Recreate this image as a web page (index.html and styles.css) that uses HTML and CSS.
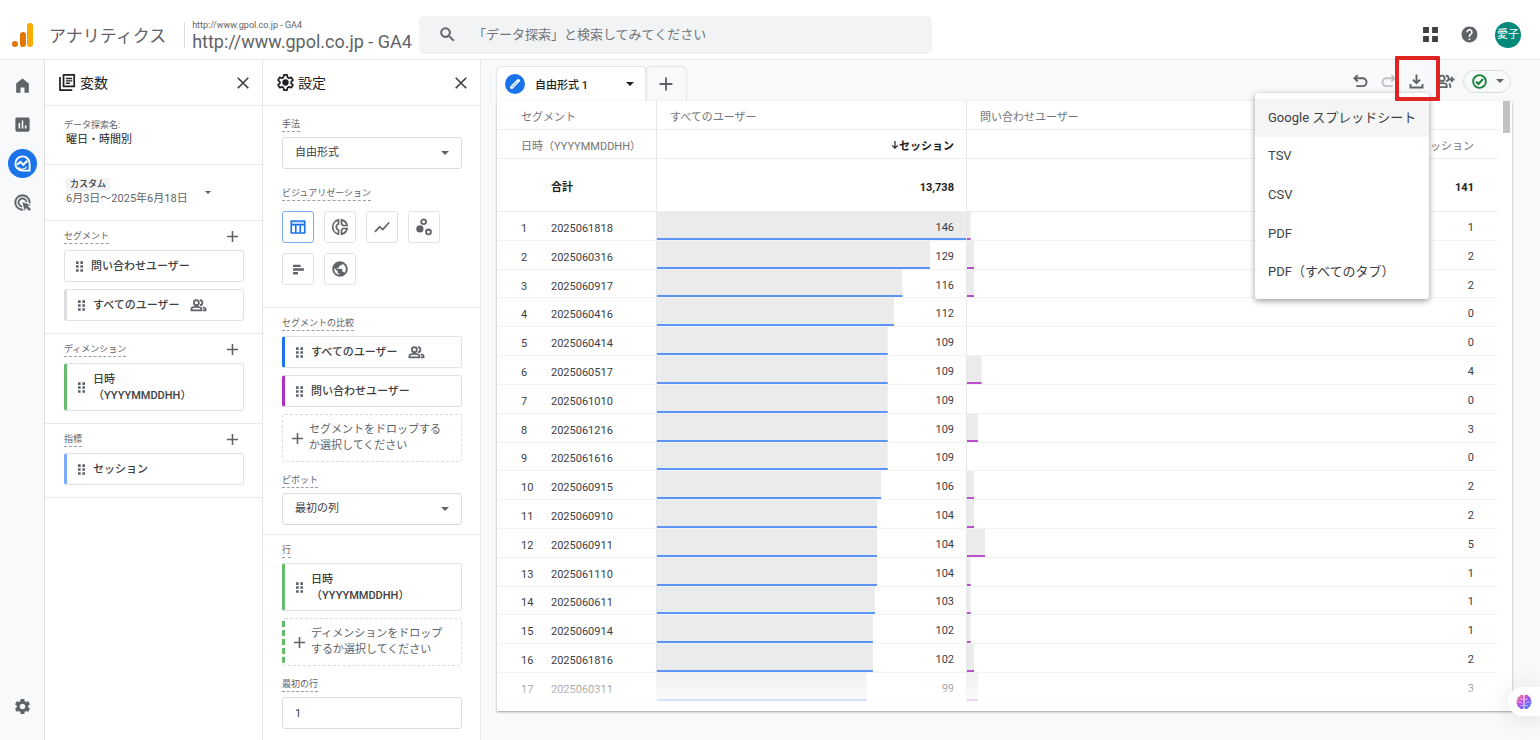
FILE: index.html
```
<!DOCTYPE html>
<html lang="ja">
<head>
    <meta charset="UTF-8">
    <meta name="viewport" content="width=device-width, initial-scale=1.0">
    <title>アナリティクス</title>
    <link rel="stylesheet" href="styles.css">
</head>
<body>
    <svg class="sprite" aria-hidden="true">
        <symbol id="i-home" viewBox="0 0 24 24"><path d="M4 21V9.500L12 3l8 6.500V21h-5.500v-6.500h-5V21z"/></symbol>
        <symbol id="i-report" viewBox="0 0 24 24"><path d="M19 3H5c-1.100 0-2 .9-2 2v14c0 1.100.9 2 2 2h14c1.100 0 2-.9 2-2V5c0-1.100-.9-2-2-2zM9 17H7v-7h2v7zm4 0h-2V7h2v10zm4 0h-2v-4h2v4z"/></symbol>
        <symbol id="i-explore" viewBox="0 0 24 24"><path d="M21 21V12a9 9 0 1 0-9 9z" fill="none" stroke="currentColor" stroke-width="2.400"/><path d="M5 13.500l4.500-3.500 3.500 3.500 5-5" fill="none" stroke="currentColor" stroke-width="2.600"/><path d="M7 17a6 6 0 0 0 10-1" fill="none" stroke="currentColor" stroke-width="1.500"/></symbol>
        <symbol id="i-click" viewBox="0 0 24 24"><path d="M11.710 17.990C8.530 17.840 6 15.220 6 12c0-3.310 2.690-6 6-6 3.220 0 5.840 2.530 5.990 5.710l-2.100-.63C15.480 9.310 13.890 8 12 8c-2.210 0-4 1.790-4 4 0 1.890 1.310 3.480 3.080 3.890l.63 2.100zM22 12c0 .3-.01.6-.04.9l-1.970-.59c.01-.1.01-.21.01-.31 0-4.420-3.580-8-8-8s-8 3.580-8 8 3.580 8 8 8c.1 0 .21 0 .31-.01l.59 1.970c-.3.030-.6.040-.9.040-5.520 0-10-4.480-10-10S6.480 2 12 2s10 4.480 10 10zm-3.770 4.260L22 15l-10-3 3 10 1.260-3.770 4.270 4.270 1.980-1.980-4.280-4.260z" stroke="currentColor" stroke-width=".4"/></symbol>
        <symbol id="i-gear" viewBox="0 0 24 24"><path d="M19.140 12.940c.04-.3.06-.61.06-.94 0-.32-.02-.64-.07-.94l2.030-1.580c.18-.14.23-.41.12-.61l-1.920-3.320c-.12-.22-.37-.29-.59-.22l-2.390.96c-.5-.38-1.030-.7-1.620-.94l-.36-2.540c-.04-.24-.24-.41-.48-.41h-3.840c-.24 0-.43.17-.47.41l-.36 2.540c-.59.24-1.130.57-1.620.94l-2.390-.96c-.22-.08-.47 0-.59.22L2.740 8.870c-.12.21-.08.47.12.61l2.030 1.580c-.05.3-.09.63-.09.94s.02.64.07.94l-2.030 1.580c-.18.14-.23.41-.12.61l1.920 3.320c.12.22.37.29.59.22l2.390-.96c.5.38 1.030.7 1.620.94l.36 2.540c.05.24.24.41.48.41h3.840c.24 0 .44-.17.47-.41l.36-2.540c.59-.24 1.130-.56 1.620-.94l2.390.96c.22.08.47 0 .59-.22l1.920-3.320c.12-.22.07-.47-.12-.61l-2.010-1.580zM12 15.600c-1.980 0-3.600-1.620-3.600-3.600s1.620-3.600 3.600-3.600 3.600 1.620 3.600 3.600-1.620 3.600-3.600 3.600z"/></symbol>
        <symbol id="i-gear-line" viewBox="0 0 24 24"><path d="M10 2.500h4l.6 3 1.900 1.100 2.900-1 2 3.500-2.300 2v1.900l2.300 2-2 3.500-2.900-1-1.900 1.100-.6 2.900h-4l-.6-2.900-1.900-1.100-2.900 1-2-3.500 2.300-2v-1.900l-2.300-2 2-3.500 2.900 1 1.900-1.100z" fill="none" stroke="currentColor" stroke-width="2.200" stroke-linejoin="round"/><circle cx="12" cy="12" r="4"/></symbol>
        <symbol id="i-library" viewBox="0 0 24 24"><path d="M7 2.500h13.500V17H7zM2.500 5v16.500H18" fill="none" stroke="currentColor" stroke-width="2.200" stroke-linejoin="round"/><path d="M10 6h8v1.800h-8zM10 9h8v1.800h-8zM10 12h5v1.800h-5z"/></symbol>
        <symbol id="i-close" viewBox="0 0 24 24"><path d="M5 5l14 14M19 5L5 19" stroke="currentColor" stroke-width="2.200"/></symbol>
        <symbol id="i-plus" viewBox="0 0 24 24"><path d="M12 5v14M5 12h14" stroke="currentColor" stroke-width="2"/></symbol>
        <symbol id="i-drag" viewBox="0 0 8 12"><path d="M0 0h3v3H0zM5 0h3v3H5zM0 4.500h3v3H0zM5 4.500h3v3H5zM0 9h3v3H0zM5 9h3v3H5z"/></symbol>
        <symbol id="i-people" viewBox="0 0 24 24"><g fill="none" stroke="currentColor" stroke-width="2.500"><circle cx="9" cy="8" r="3.500"/><path d="M2 19v-2c0-2 4-3 7-3s7 1 7 3v2z"/><path d="M14 4.500a3.500 3.500 0 0 1 0 7M18 14.500c2 .5 4 1.300 4 2.500v2h-4"/></g></symbol>
        <symbol id="i-share" viewBox="0 0 24 24"><g fill="none" stroke="currentColor" stroke-width="2.300"><circle cx="7.500" cy="8" r="3.500"/><path d="M1.500 19v-2c0-2 3.500-3 6-3s6 1 6 3v2z"/><path d="M12.500 4.500a3.500 3.500 0 0 1 0 7M16.500 14.500c1 .6 1.500 1.300 1.500 2.500v3M20 6v7M16.500 9.500h7"/></g></symbol>
        <symbol id="i-search" viewBox="0 0 24 24"><path d="M15.500 14h-.79l-.28-.27A6.471 6.471 0 0 0 16 9.500 6.500 6.500 0 1 0 9.500 16c1.610 0 3.090-.59 4.230-1.570l.27.28v.79l5 4.990L20.490 19l-4.990-5zm-6 0C7.010 14 5 11.990 5 9.500S7.010 5 9.500 5 14 7.010 14 9.500 11.990 14 9.500 14z" stroke="currentColor" stroke-width=".5"/></symbol>
        <symbol id="i-apps" viewBox="0 0 16 16"><path d="M1 1h5.500v5.500H1zM9.500 1H15v5.500H9.500zM1 9.500h5.500V15H1zM9.500 9.500H15V15H9.500z"/></symbol>
        <symbol id="i-help" viewBox="0 0 24 24"><path d="M12 2C6.480 2 2 6.480 2 12s4.480 10 10 10 10-4.480 10-10S17.520 2 12 2zm1 17h-2v-2h2v2zm2.070-7.750l-.9.920C13.450 12.900 13 13.500 13 15h-2v-.5c0-1.100.45-2.100 1.170-2.830l1.240-1.260c.37-.36.59-.86.59-1.410 0-1.100-.9-2-2-2s-2 .9-2 2H8c0-2.210 1.790-4 4-4s4 1.790 4 4c0 .88-.36 1.680-.93 2.250z"/></symbol>
        <symbol id="i-table" viewBox="0 0 24 24"><path d="M3 4h18v16H3zM3 9h18M9 9v11M15 9v11" fill="none" stroke="currentColor" stroke-width="2.200" stroke-linejoin="round"/><path d="M4 5h16v3H4z" opacity=".3"/></symbol>
        <symbol id="i-donut" viewBox="0 0 24 24"><g fill="none" stroke="currentColor" stroke-width="2.200"><path d="M10 2.500a9.700 9.700 0 0 0 0 19v-5.500a4.200 4.200 0 0 1 0-8zM14 2.500a9.700 9.700 0 0 1 7.500 7.500h-5.500a4.200 4.200 0 0 0-2-2zM14 21.500a9.700 9.700 0 0 0 7.500-7.500h-5.500a4.200 4.200 0 0 1-2 2z"/></g></symbol>
        <symbol id="i-line" viewBox="0 0 24 24"><path d="M2.500 18.500l6.500-7 4 4L21.500 6" fill="none" stroke="currentColor" stroke-width="2.200"/></symbol>
        <symbol id="i-scatter" viewBox="0 0 24 24"><circle cx="6.500" cy="14.500" r="4.800"/><circle cx="11.500" cy="5" r="3.200" fill="none" stroke="currentColor" stroke-width="2.400"/><circle cx="18" cy="18.500" r="3.200" fill="none" stroke="currentColor" stroke-width="2.400"/></symbol>
        <symbol id="i-bars" viewBox="0 0 24 24"><path d="M2 3h14v4.200H2zM2 9.900h20v4.200H2zM2 16.800h9V21H2z"/></symbol>
        <symbol id="i-globe" viewBox="0 0 24 24"><path d="M12 2C6.480 2 2 6.480 2 12s4.480 10 10 10 10-4.480 10-10S17.520 2 12 2zm-1 17.930c-3.950-.49-7-3.850-7-7.930 0-.62.08-1.210.21-1.790L9 15v1c0 1.100.9 2 2 2v1.930zm6.900-2.540c-.26-.81-1-1.390-1.900-1.390h-1v-3c0-.55-.45-1-1-1H8v-2h2c.55 0 1-.45 1-1V7h2c1.100 0 2-.9 2-2v-.41c2.930 1.190 5 4.060 5 7.410 0 2.080-.8 3.970-2.100 5.390z" stroke="currentColor" stroke-width=".5"/></symbol>
        <symbol id="i-pencil" viewBox="0 0 24 24"><path d="M7 17L17 7" stroke="currentColor" stroke-width="5" stroke-linecap="round"/><path d="M8 16.500l8-8" stroke="#1a73e8" stroke-width="1"/></symbol>
        <symbol id="i-undo" viewBox="0 0 24 24"><path d="M8 3L3.500 7.500 8 12M3.500 7.500H15a5.500 5.500 0 0 1 0 11H6" fill="none" stroke="currentColor" stroke-width="2.700"/></symbol>
        <symbol id="i-redo" viewBox="0 0 24 24"><path d="M16 3l4.500 4.500L16 12M20.500 7.500H9a5.500 5.500 0 0 0 0 11h9" fill="none" stroke="currentColor" stroke-width="2.700"/></symbol>
        <symbol id="i-download" viewBox="0 0 24 24"><path d="M12 2v12M7 9.500l5 5 5-5M3.500 15.500v5h17v-5" fill="none" stroke="currentColor" stroke-width="2.700"/></symbol>
        <symbol id="i-check" viewBox="0 0 24 24"><circle cx="12" cy="12" r="9" fill="none" stroke="currentColor" stroke-width="2.600"/><path d="M7 12l3.500 3.500 6.500-7" fill="none" stroke="currentColor" stroke-width="2.800"/></symbol>
        <symbol id="i-sort" viewBox="0 0 10 12"><path d="M5 1v9M1.500 6.500L5 10l3.500-3.500" fill="none" stroke="currentColor" stroke-width="1.500"/></symbol>
    </svg>

    <header class="header">
        <a class="brand" href="#">
            <svg class="logo" viewBox="0 0 22 24" aria-hidden="true">
                <rect x="15" y="0" width="6" height="24" rx="3" fill="#f9ab00"/>
                <rect x="8" y="9" width="6" height="15" rx="3" fill="#e37400"/>
                <circle cx="3" cy="21" r="3" fill="#e37400"/>
            </svg>
            <span class="brand-name">アナリティクス</span>
        </a>
        <a class="property" href="#">
            <span class="property-account">http://www.gpol.co.jp - GA4</span>
            <span class="property-name">http://www.gpol.co.jp - GA4</span>
        </a>
        <form class="search">
            <svg class="icon"><use href="#i-search"/></svg>
            <input type="text" aria-label="検索" placeholder="「データ探索」と検索してみてください">
        </form>
        <div class="header-actions">
            <button type="button" class="apps" aria-label="アプリ"><svg class="icon"><use href="#i-apps"/></svg></button>
            <button type="button" aria-label="ヘルプ"><svg class="icon"><use href="#i-help"/></svg></button>
            <button type="button" class="avatar">愛子</button>
        </div>
    </header>

    <div class="layout">
        <nav class="rail">
            <a href="#" aria-label="ホーム"><svg class="icon"><use href="#i-home"/></svg></a>
            <a href="#" aria-label="レポート"><svg class="icon"><use href="#i-report"/></svg></a>
            <a href="#" class="active" aria-label="探索"><svg class="icon"><use href="#i-explore"/></svg></a>
            <a href="#" aria-label="広告"><svg class="icon"><use href="#i-click"/></svg></a>
            <a href="#" class="rail-bottom" aria-label="管理"><svg class="icon"><use href="#i-gear"/></svg></a>
        </nav>

        <aside class="panel">
            <div class="panel-title">
                <svg class="icon"><use href="#i-library"/></svg>
                <h2>変数</h2>
                <button type="button" aria-label="閉じる"><svg class="icon icon-close"><use href="#i-close"/></svg></button>
            </div>
            <div class="exploration">
                <label for="explorationName">データ探索名:</label>
                <input type="text" id="explorationName" value="曜日・時間別">
            </div>
            <button type="button" class="date-range">
                <span class="dates">
                    <span class="badge">カスタム</span>
                    <span>6月3日～2025年6月18日</span>
                </span>
                <span class="caret"></span>
            </button>
            <section class="group">
                <div class="group-head">
                    <h3 class="label">セグメント</h3>
                    <button type="button" aria-label="セグメントを追加"><svg class="icon"><use href="#i-plus"/></svg></button>
                </div>
                <div class="chip"><svg class="drag"><use href="#i-drag"/></svg>問い合わせユーザー</div>
                <div class="chip gray"><svg class="drag"><use href="#i-drag"/></svg>すべてのユーザー<svg class="icon people"><use href="#i-people"/></svg></div>
            </section>
            <section class="group">
                <div class="group-head">
                    <h3 class="label">ディメンション</h3>
                    <button type="button" aria-label="ディメンションを追加"><svg class="icon"><use href="#i-plus"/></svg></button>
                </div>
                <div class="chip tall green"><svg class="drag"><use href="#i-drag"/></svg><span>日時<br>（YYYYMMDDHH）</span></div>
            </section>
            <section class="group last">
                <div class="group-head">
                    <h3 class="label">指標</h3>
                    <button type="button" aria-label="指標を追加"><svg class="icon"><use href="#i-plus"/></svg></button>
                </div>
                <div class="chip lightblue"><svg class="drag"><use href="#i-drag"/></svg>セッション</div>
            </section>
        </aside>

        <aside class="panel">
            <div class="panel-title">
                <svg class="icon"><use href="#i-gear-line"/></svg>
                <h2>設定</h2>
                <button type="button" aria-label="閉じる"><svg class="icon icon-close"><use href="#i-close"/></svg></button>
            </div>
            <section class="settings first">
                <div class="field">
                    <label class="label" for="technique">手法</label>
                    <div class="select">
                        <select id="technique"><option>自由形式</option></select>
                    </div>
                </div>
                <div class="field">
                    <h3 class="label">ビジュアリゼーション</h3>
                    <div class="visuals">
                        <button type="button" class="active" aria-label="表"><svg class="icon"><use href="#i-table"/></svg></button>
                        <button type="button" aria-label="ドーナツ グラフ"><svg class="icon"><use href="#i-donut"/></svg></button>
                        <button type="button" aria-label="折れ線グラフ"><svg class="icon"><use href="#i-line"/></svg></button>
                        <button type="button" aria-label="散布図"><svg class="icon"><use href="#i-scatter"/></svg></button>
                        <button type="button" aria-label="棒グラフ"><svg class="icon icon-bars"><use href="#i-bars"/></svg></button>
                        <button type="button" aria-label="地図"><svg class="icon"><use href="#i-globe"/></svg></button>
                    </div>
                </div>
            </section>
            <section class="settings">
                <div class="field">
                    <h3 class="label">セグメントの比較</h3>
                    <div class="chip blue"><svg class="drag"><use href="#i-drag"/></svg>すべてのユーザー<svg class="icon people"><use href="#i-people"/></svg></div>
                    <div class="chip purple"><svg class="drag"><use href="#i-drag"/></svg>問い合わせユーザー</div>
                    <button type="button" class="drop"><svg class="icon"><use href="#i-plus"/></svg><span>セグメントをドロップする<br>か選択してください</span></button>
                </div>
                <div class="field">
                    <label class="label" for="pivot">ピボット</label>
                    <div class="select">
                        <select id="pivot"><option>最初の列</option></select>
                    </div>
                </div>
            </section>
            <section class="settings">
                <div class="field">
                    <h3 class="label">行</h3>
                    <div class="chip tall green"><svg class="drag"><use href="#i-drag"/></svg><span>日時<br>（YYYYMMDDHH）</span></div>
                    <button type="button" class="drop drop-green"><svg class="icon"><use href="#i-plus"/></svg><span>ディメンションをドロップ<br>するか選択してください</span></button>
                </div>
                <div class="field">
                    <label class="label" for="startRow">最初の行</label>
                    <input type="text" id="startRow" class="textbox" value="1">
                </div>
            </section>
        </aside>

        <main class="main">
            <div class="topbar">
                <div class="tabs">
                    <button type="button" class="tab">
                        <span class="tab-icon"><svg class="icon"><use href="#i-pencil"/></svg></span>
                        <span class="tab-name">自由形式 1</span>
                        <span class="caret"></span>
                    </button>
                    <button type="button" class="tab-add" aria-label="タブを追加"><svg class="icon"><use href="#i-plus"/></svg></button>
                </div>
                <div class="tools">
                    <button type="button" aria-label="元に戻す"><svg class="icon"><use href="#i-undo"/></svg></button>
                    <button type="button" aria-label="やり直す" disabled><svg class="icon"><use href="#i-redo"/></svg></button>
                    <div class="export">
                        <button type="button" aria-label="データをエクスポート"><svg class="icon"><use href="#i-download"/></svg></button>
                        <div class="menu">
                            <button type="button" class="active">Google スプレッドシート</button>
                            <button type="button">TSV</button>
                            <button type="button">CSV</button>
                            <button type="button">PDF</button>
                            <button type="button">PDF（すべてのタブ）</button>
                        </div>
                        <span class="marker"></span>
                    </div>
                    <button type="button" aria-label="共有"><svg class="icon icon-share"><use href="#i-share"/></svg></button>
                    <button type="button" class="status" aria-label="ステータス"><svg class="icon"><use href="#i-check"/></svg><span class="caret"></span></button>
                </div>
            </div>

            <div class="card">
                <table class="report">
                    <colgroup>
                        <col class="col-index">
                        <col class="col-date">
                        <col class="col-all">
                        <col>
                    </colgroup>
                    <thead>
                        <tr class="segments">
                            <th colspan="2">セグメント</th>
                            <th>すべてのユーザー</th>
                            <th>問い合わせユーザー</th>
                        </tr>
                        <tr class="metrics">
                            <th colspan="2">日時（YYYYMMDDHH）</th>
                            <th class="value sorted"><svg class="sort"><use href="#i-sort"/></svg>セッション</th>
                            <th class="value">セッション</th>
                        </tr>
                        <tr class="total">
                            <th></th>
                            <th>合計</th>
                            <th class="value">13,738</th>
                            <th class="value">141</th>
                        </tr>
                    </thead>
                    <tbody>
                        <tr><td>1</td><td>2025061818</td><td class="value" style="--v: 146">146</td><td class="value" style="--v: 1">1</td></tr>
                        <tr><td>2</td><td>2025060316</td><td class="value" style="--v: 129">129</td><td class="value" style="--v: 2">2</td></tr>
                        <tr><td>3</td><td>2025060917</td><td class="value" style="--v: 116">116</td><td class="value" style="--v: 2">2</td></tr>
                        <tr><td>4</td><td>2025060416</td><td class="value" style="--v: 112">112</td><td class="value" style="--v: 0">0</td></tr>
                        <tr><td>5</td><td>2025060414</td><td class="value" style="--v: 109">109</td><td class="value" style="--v: 0">0</td></tr>
                        <tr><td>6</td><td>2025060517</td><td class="value" style="--v: 109">109</td><td class="value" style="--v: 4">4</td></tr>
                        <tr><td>7</td><td>2025061010</td><td class="value" style="--v: 109">109</td><td class="value" style="--v: 0">0</td></tr>
                        <tr><td>8</td><td>2025061216</td><td class="value" style="--v: 109">109</td><td class="value" style="--v: 3">3</td></tr>
                        <tr><td>9</td><td>2025061616</td><td class="value" style="--v: 109">109</td><td class="value" style="--v: 0">0</td></tr>
                        <tr><td>10</td><td>2025060915</td><td class="value" style="--v: 106">106</td><td class="value" style="--v: 2">2</td></tr>
                        <tr><td>11</td><td>2025060910</td><td class="value" style="--v: 104">104</td><td class="value" style="--v: 2">2</td></tr>
                        <tr><td>12</td><td>2025060911</td><td class="value" style="--v: 104">104</td><td class="value" style="--v: 5">5</td></tr>
                        <tr><td>13</td><td>2025061110</td><td class="value" style="--v: 104">104</td><td class="value" style="--v: 1">1</td></tr>
                        <tr><td>14</td><td>2025060611</td><td class="value" style="--v: 103">103</td><td class="value" style="--v: 1">1</td></tr>
                        <tr><td>15</td><td>2025060914</td><td class="value" style="--v: 102">102</td><td class="value" style="--v: 1">1</td></tr>
                        <tr><td>16</td><td>2025061816</td><td class="value" style="--v: 102">102</td><td class="value" style="--v: 2">2</td></tr>
                        <tr><td>17</td><td>2025060311</td><td class="value" style="--v: 99">99</td><td class="value" style="--v: 3">3</td></tr>
                    </tbody>
                </table>
                <div class="scrollbar"></div>
                <div class="fade"></div>
            </div>
        </main>
    </div>

    <button type="button" class="assistant" aria-label="アシスタント">
        <svg viewBox="0 0 16 16" aria-hidden="true">
            <defs>
                <linearGradient id="brain" x1="0" y1="0" x2="1" y2="1">
                    <stop offset="0" stop-color="#f5a15a"/>
                    <stop offset=".35" stop-color="#c850d8"/>
                    <stop offset=".65" stop-color="#7a5cf5"/>
                    <stop offset="1" stop-color="#2fa0ff"/>
                </linearGradient>
            </defs>
            <path fill="url(#brain)" d="M7.500 1.500C6 .2 3.800.8 3.300 2.500 1.500 2.800 1 4.500 1.500 5.800 0 7 0 9.300 1.400 10.400 1.200 12.300 2.300 13.300 3.600 13.500 4.300 15.300 6.300 15.700 7.500 14.500zM8.500 1.500C10 .2 12.200.8 12.700 2.500 14.500 2.800 15 4.500 14.500 5.800 16 7 16 9.300 14.600 10.400 14.800 12.300 13.700 13.300 12.400 13.500 11.700 15.300 9.700 15.700 8.500 14.500z"/>
            <path fill="none" stroke="#fff" stroke-width=".8" opacity=".7" d="M7 5.500H5V4M1.500 8H5l1 1.500M7 11.500H4.500M9 5.500h2V4M14.500 8H11l-1 1.500M9 11.500h3"/>
        </svg>
    </button>
</body>
</html>
```
FILE: styles.css
```
* {
    box-sizing: border-box;
}
body {
    margin: 0;
    min-height: 100vh;
    display: flex;
    flex-direction: column;
    font-family: Roboto, "Noto Sans CJK JP", sans-serif;
    font-size: 11px;
    line-height: 16px;
    color: #3c4043;
    background-color: #f8f9fa;
}
h2, h3 {
    margin: 0;
    font-weight: 400;
}
a {
    color: inherit;
    text-decoration: none;
}
button, input, select {
    font: inherit;
    color: inherit;
}
button {
    display: flex;
    align-items: center;
    justify-content: center;
    padding: 0;
    border: none;
    background: none;
    cursor: pointer;
}
.sprite {
    display: none;
}
.icon {
    width: 19px;
    height: 19px;
    flex: none;
    fill: currentColor;
}
.caret {
    border: 4px solid transparent;
    border-top-color: #5f6368;
    border-bottom: none;
}

/* header */
.header {
    display: flex;
    align-items: center;
    height: 60px;
    padding: 10px 19px 0 12px;
    background-color: #fff;
    border-bottom: 1px solid #e8eaed;
    color: #5f6368;
}
.brand {
    display: flex;
    align-items: center;
    gap: 15px;
    padding-right: 18px;
}
.logo {
    width: 22px;
    height: 24px;
}
.brand-name {
    padding-top: 2px;
    font-size: 17px;
    line-height: 24px;
}
.property {
    display: flex;
    flex-direction: column;
    height: 26px;
    justify-content: center;
    padding: 0 7px;
    border-left: 1px solid #dadce0;
    white-space: nowrap;
}
.property-account {
    font-size: 9px;
    line-height: 14px;
}
.property-name {
    font-size: 18px;
    line-height: 20px;
}
.search {
    display: flex;
    align-items: center;
    gap: 16px;
    flex: 0 1 513px;
    height: 38px;
    padding: 0 19px;
    background-color: #f1f3f4;
    border-radius: 5px;
}
.search input {
    flex: 1;
    min-width: 0;
    padding: 0;
    border: none;
    background: none;
    outline: none;
    font-size: 13px;
}
.search input::placeholder {
    color: #70757a;
}
.header-actions {
    display: flex;
    align-items: center;
    gap: 16px;
    margin-left: auto;
}
.apps {
    margin-right: 5px;
    color: #3c4043;
}
.apps .icon {
    width: 17px;
    height: 17px;
}
.header-actions .avatar {
    width: 26px;
    height: 26px;
    border-radius: 50%;
    background-color: #00897b;
    color: #fff;
}

/* layout */
.layout {
    display: flex;
    flex: 1;
}
.rail {
    display: flex;
    flex-direction: column;
    align-items: center;
    gap: 10px;
    width: 45px;
    padding: 11px 0 19px;
    border-right: 1px solid #dadce0;
    color: #5f6368;
}
.rail a {
    display: flex;
    align-items: center;
    justify-content: center;
    width: 29px;
    height: 29px;
    border-radius: 50%;
}
.rail a.active {
    background-color: #1a73e8;
    color: #fff;
}
.rail a.rail-bottom {
    margin-top: auto;
}
.panel {
    width: 218px;
    background-color: #fff;
    border-right: 1px solid #e4e6e9;
}
.panel-title {
    display: flex;
    align-items: center;
    gap: 3px;
    height: 46px;
    padding: 0 10px 0 13px;
    border-bottom: 1px solid #e8eaed;
    color: #202124;
}
.panel-title h2 {
    flex: 1;
    font-size: 14px;
    line-height: 20px;
}
.panel-title button {
    color: #3c4043;
}
.icon-close {
    width: 18px;
    height: 18px;
}

/* variables */
.exploration {
    display: flex;
    flex-direction: column;
    height: 58px;
    padding: 13px 19px;
}
.exploration label {
    font-size: 9px;
    line-height: 13px;
    color: #5f6368;
}
.exploration input {
    width: 100%;
    height: 16px;
    padding: 0 2px;
    border: none;
    color: #202124;
}
.date-range {
    justify-content: flex-start;
    gap: 17px;
    width: 100%;
    height: 56px;
    padding: 0 21px;
    border-top: 1px solid #e8eaed;
    color: #5f6368;
    text-align: left;
}
.date-range .caret {
    border-width: 3px;
    border-bottom: none;
}
.dates {
    display: flex;
    flex-direction: column;
    align-items: flex-start;
}
.badge {
    padding: 0 4px;
    font-size: 9px;
    font-weight: 500;
    line-height: 13px;
    color: #3c4043;
    background-color: #f1f3f4;
}
.group {
    display: flex;
    flex-direction: column;
    gap: 7px;
    padding: 0 18px 12px 19px;
    border-top: 1px solid #e8eaed;
}
.group.last {
    border-bottom: 1px solid #e8eaed;
}
.group-head {
    display: flex;
    align-items: center;
    justify-content: space-between;
    height: 29px;
    margin-bottom: -7px;
    padding-top: 1px;
    padding-right: 2px;
    color: #5f6368;
}
.label {
    align-self: flex-start;
    border-bottom: 1px dashed #9aa0a6;
    font-size: 9px;
    line-height: 14px;
    color: #5f6368;
}
.group-head .label {
    align-self: center;
}
.chip {
    display: flex;
    align-items: center;
    gap: 8px;
    height: 32px;
    padding-top: 1px;
    padding-left: 11px;
    border: 1px solid #e0e2e5;
    border-radius: 3px;
    background-color: #fff;
    font-weight: 500;
}
.chip.tall {
    height: 48px;
}
.drag {
    width: 7px;
    height: 11px;
    fill: #5f6368;
}
.people {
    width: 17px;
    height: 17px;
    margin-left: 2px;
    color: #5f6368;
}
.gray {
    border-left: 3px solid #dadce0;
}
.green {
    border-left: 3px solid #66bb6a;
}
.lightblue {
    border-left: 3px solid #7baaf7;
}
.blue {
    border-left: 3px solid #1a73e8;
}
.purple {
    border-left: 3px solid #b12cc9;
}

/* settings */
.settings {
    display: flex;
    flex-direction: column;
    gap: 11px;
    padding: 8px 18px 9px 19px;
    border-top: 1px solid #e8eaed;
}
.settings.first {
    gap: 17px;
    padding-top: 11px;
    padding-bottom: 22px;
    border-top: none;
}
.field {
    display: flex;
    flex-direction: column;
    gap: 7px;
}
.field .label {
    margin-bottom: -2px;
}
.select {
    position: relative;
}
.select::after {
    content: "";
    position: absolute;
    right: 13px;
    top: 14px;
    border: 4px solid transparent;
    border-top-color: #5f6368;
    border-bottom: none;
    pointer-events: none;
}
.select select, .textbox {
    display: block;
    width: 100%;
    height: 32px;
    padding: 0 12px;
    border: 1px solid #dadce0;
    border-radius: 3px;
    background-color: #fff;
    appearance: none;
}
.visuals {
    display: flex;
    flex-wrap: wrap;
    gap: 10px;
    padding-top: 5px;
}
.visuals button {
    width: 32px;
    height: 32px;
    border: 1px solid #e0e2e5;
    border-radius: 3px;
    color: #5f6368;
}
.visuals button.active {
    border-color: #7baaf7;
    color: #1a73e8;
}
.visuals .icon {
    width: 18px;
    height: 18px;
}
.visuals .icon-bars {
    width: 13px;
    height: 13px;
}
.drop {
    justify-content: flex-start;
    gap: 2px;
    height: 48px;
    padding-left: 5px;
    border: 1px dashed #dadce0;
    border-radius: 3px;
    color: #5f6368;
    text-align: left;
}
.drop-green {
    border-left: 3px dashed #66bb6a;
}

/* report */
.main {
    display: flex;
    flex-direction: column;
    flex: 1;
    min-width: 0;
    padding: 7px 28px 29px 16px;
}
.topbar {
    display: flex;
    justify-content: space-between;
    height: 34px;
}
.tabs {
    display: flex;
}
.tab, .tab-add {
    border-radius: 5px 5px 0 0;
    box-shadow: 0 0 2px rgba(60, 64, 67, .35);
    clip-path: inset(-2px -2px 0 -2px);
}
.tab {
    gap: 10px;
    width: 149px;
    padding: 0 12px 0 8px;
    background-color: #fff;
    color: #202124;
    font-weight: 500;
}
.tab-name {
    padding-top: 3px;
}
.tab .caret {
    margin-left: auto;
    border-top-color: #202124;
}
.tab-icon {
    display: flex;
    align-items: center;
    justify-content: center;
    width: 20px;
    height: 20px;
    border-radius: 50%;
    background-color: #1a73e8;
    color: #fff;
}
.tab-icon .icon {
    width: 16px;
    height: 16px;
}
.tab-add {
    width: 40px;
    color: #5f6368;
}
.tab-add .icon {
    width: 22px;
    height: 22px;
}
.tools {
    display: flex;
    align-items: center;
    gap: 11px;
    height: 28px;
    padding-right: 1px;
    color: #5f6368;
}
.tools .icon {
    width: 17px;
    height: 17px;
}
.tools .icon-share {
    width: 19px;
    height: 19px;
}
.tools button:disabled {
    color: #bdc1c6;
}
.tools .status {
    gap: 8px;
    width: 48px;
    height: 23px;
    margin-left: -3px;
    border: 1px solid #dadce0;
    border-radius: 12px;
}
.status .icon {
    color: #188038;
}
.export {
    position: relative;
    z-index: 2;
}
.marker {
    position: absolute;
    top: -17px;
    left: -13px;
    width: 45px;
    height: 45px;
    border: 4px solid #e02424;
    border-radius: 1px;
    pointer-events: none;
}
.menu {
    position: absolute;
    top: 20px;
    right: -4px;
    display: flex;
    flex-direction: column;
    width: 174px;
    height: 206px;
    padding: 6px 0 7px;
    border-radius: 3px;
    background-color: #fff;
    box-shadow: 0 2px 6px rgba(0, 0, 0, .4);
}
.menu button {
    flex: 1;
    justify-content: flex-start;
    padding: 0 13px;
    font-size: 13px;
    color: #3c4043;
    white-space: nowrap;
}
.menu button.active {
    background-color: #f5f5f5;
}
.card {
    position: relative;
    display: flex;
    flex: 1;
    padding: 0 14px 9px 0;
    background-color: #fff;
    box-shadow: 0 1px 2px rgba(60, 64, 67, .5);
}
.report {
    width: 100%;
    table-layout: fixed;
    border-collapse: separate;
    border-spacing: 0;
}
.col-index {
    width: 54px;
}
.col-date {
    width: 106px;
}
.col-all {
    width: 310px;
}
.report th, .report td {
    padding: 6px 0 0;
    border-bottom: 1px solid #f1f3f4;
    text-align: left;
    white-space: nowrap;
}
.report th {
    border-bottom-color: #eceef0;
    color: #757575;
    font-weight: 400;
}
.report tr > :first-child {
    padding-left: 24px;
}
.report tr > :nth-last-child(3), .report tr > :nth-last-child(2) {
    border-right: 1px solid #e4e6e9;
}
.segments {
    height: 29px;
}
.metrics {
    height: 29px;
}
.total {
    height: 53px;
}
.segments th:not(:first-child) {
    padding-left: 13px;
}
.report .value {
    padding-top: 4px;
    padding-right: 12px;
    text-align: right;
}
.report th.value {
    padding-top: 6px;
}
.report .value:last-child {
    padding-right: 24px;
}
.report .sorted, .report .total th {
    color: #212121;
    font-weight: 700;
}
.sort {
    width: 8px;
    height: 10px;
}
td.value {
    --bar: #5a95f5;
    --size: calc(var(--v) / 146 * 100%);
    background-image: linear-gradient(var(--bar), var(--bar)), linear-gradient(#ebebeb, #ebebeb);
    background-size: var(--size) 2px, var(--size) 100%;
    background-position: left bottom, left top;
    background-repeat: no-repeat;
    background-clip: padding-box;
}
td.value:last-child {
    --bar: #b94fcd;
}
.scrollbar {
    position: absolute;
    top: 0;
    right: 2px;
    width: 7px;
    height: 32px;
    background-color: #c1c1c1;
}
.fade {
    position: absolute;
    right: 0;
    bottom: 1px;
    left: 0;
    height: 37px;
    background: linear-gradient(rgba(255, 255, 255, .3), rgba(255, 255, 255, .8) 80%, #fff);
}

.assistant {
    position: fixed;
    right: 0;
    bottom: 24px;
    width: 32px;
    height: 29px;
    border-radius: 15px 0 0 15px;
    background-color: #fff;
    box-shadow: 0 2px 24px rgba(0, 0, 0, .12);
}
.assistant svg {
    width: 16px;
    height: 16px;
}
```
